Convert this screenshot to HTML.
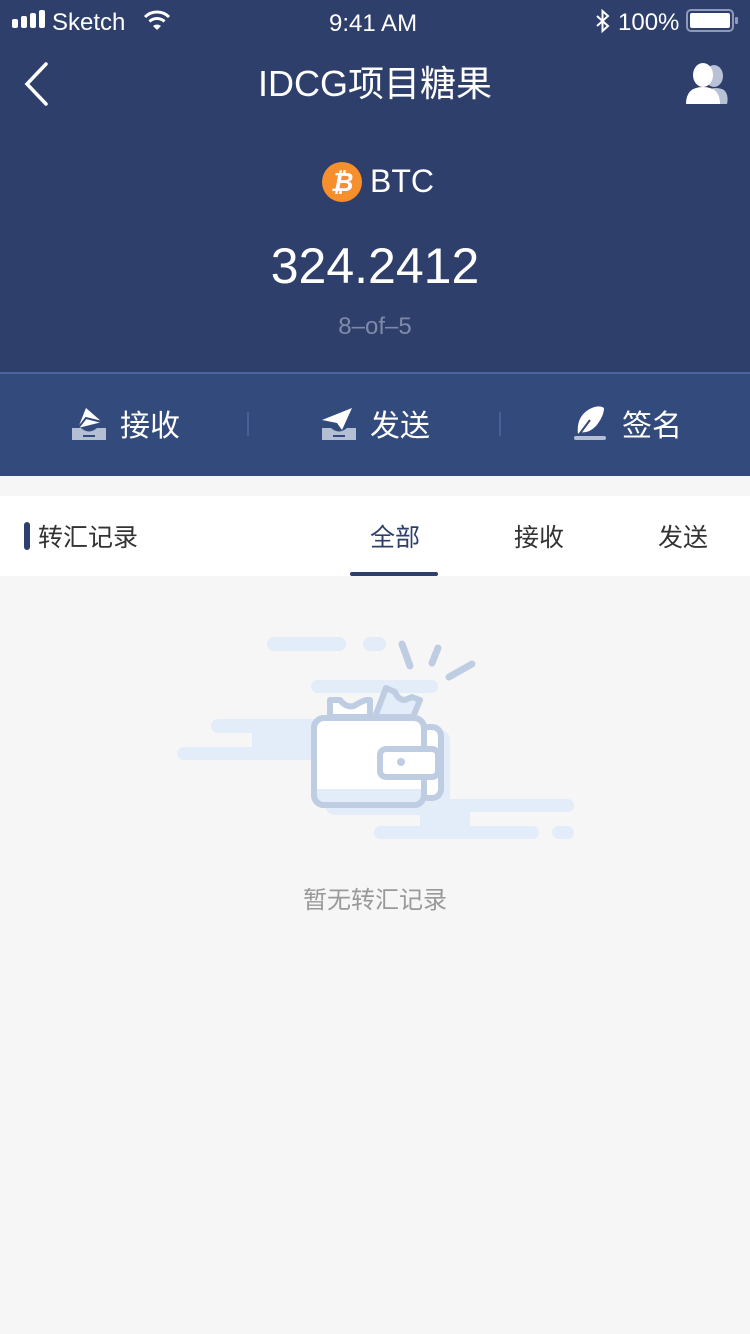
<!DOCTYPE html>
<html><head><meta charset="utf-8"><style>
*{margin:0;padding:0;box-sizing:border-box}
body{width:750px;height:1334px;background:#f6f6f6;font-family:"Liberation Sans","Noto Sans CJK SC",sans-serif;position:relative;overflow:hidden}
.abs{position:absolute}
.hdr{left:0;top:0;width:750px;height:372px;background:#2f3f6b}
.bar{left:0;top:372px;width:750px;height:104px;background:#334a7c;border-top:2px solid #4a64a0}
.w{color:#fff}
</style></head><body>
<div class="abs hdr"></div>
<div class="abs bar"></div>
<!-- status bar -->
<svg class="abs" style="left:12px;top:10px" width="36" height="20"><rect x="0" y="9" width="6" height="9" rx="2" fill="#fff"/><rect x="9" y="6" width="6" height="12" rx="2" fill="#fff"/><rect x="18" y="3" width="6" height="15" rx="2" fill="#fff"/><rect x="27" y="0" width="6" height="18" rx="2" fill="#fff"/></svg>
<div class="abs w" style="left:52px;top:9px;font-size:24px">Sketch</div>
<svg class="abs" style="left:143px;top:9px" width="28" height="22" viewBox="0 0 28 22"><path d="M2 8 A17 17 0 0 1 26 8" stroke="#fff" stroke-width="3" fill="none"/><path d="M6.5 12.5 A11 11 0 0 1 21.5 12.5" stroke="#fff" stroke-width="3" fill="none"/><path d="M10 17 L14 21 L18 17 A6 6 0 0 0 10 17Z" fill="#fff"/></svg>
<div class="abs w" style="left:329px;top:10px;font-size:24px">9:41 AM</div>
<svg class="abs" style="left:595px;top:9px" width="16" height="24"><path d="M2 7 L13 17 L7.5 22 V2 L13 7 L2 17" stroke="#fff" stroke-width="2" fill="none"/></svg>
<div class="abs w" style="left:618px;top:9px;font-size:24px">100%</div>
<svg class="abs" style="left:686px;top:9px" width="54" height="24"><rect x="1" y="1" width="46" height="21" rx="4" fill="none" stroke="#8f9ab8" stroke-width="2"/><rect x="4" y="4" width="40" height="15" rx="2" fill="#fff"/><rect x="49" y="8" width="3" height="7" rx="1" fill="#8f9ab8"/></svg>
<!-- nav -->
<svg class="abs" style="left:22px;top:62px" width="28" height="44"><path d="M24 2 L5 22 L24 42" stroke="#fff" stroke-width="3.5" fill="none" stroke-linecap="round"/></svg>
<div class="abs w" style="left:0;width:750px;text-align:center;top:55px;font-size:36px">IDCG项目糖果</div>
<svg class="abs" style="left:684px;top:62px" width="46" height="44"><ellipse cx="30" cy="14" rx="9" ry="11" fill="#b9c1d6"/><path d="M24 42 V28 Q32 24 40 28 Q45 33 43 42Z" fill="#b9c1d6"/><ellipse cx="19" cy="13" rx="10" ry="12" fill="#fff"/><path d="M2 42 Q2 25 19 25 Q36 25 36 42Z" fill="#fff"/></svg>
<!-- BTC -->
<svg class="abs" style="left:322px;top:162px" width="40" height="40"><circle cx="20" cy="20" r="20" fill="#f7902c"/><text x="20" y="29" text-anchor="middle" font-family="Liberation Sans" font-weight="bold" font-style="italic" font-size="26" fill="#fff">₿</text></svg>
<div class="abs w" style="left:370px;top:163px;font-size:32px">BTC</div>
<div class="abs w" style="left:0;width:750px;text-align:center;top:237px;font-size:50px">324.2412</div>
<div class="abs" style="left:0;width:750px;text-align:center;top:313px;font-size:24px;color:#7f8aa8">8–of–5</div>
<!-- action bar -->
<svg class="abs" style="left:72px;top:408px" width="34" height="34"><path d="M6 20 L14 0 L30 14 Z" fill="#fff"/><path d="M6 20 L14 10 L30 14" stroke="#334a7c" stroke-width="2" fill="none"/><path d="M0 20 H9 Q17 27 25 20 H34 V32 H0Z" fill="#b5bfd4"/><rect x="11" y="27" width="12" height="2" fill="#334a7c"/></svg>
<div class="abs w" style="left:120px;top:401px;font-size:30px">接收</div>
<div class="abs" style="left:247px;top:412px;width:2px;height:24px;background:#47609a"></div>
<svg class="abs" style="left:322px;top:408px" width="34" height="34"><path d="M0 12 L30 0 L20 22 L15 15 Z" fill="#fff"/><path d="M0 20 H9 Q17 27 25 20 H34 V32 H0Z" fill="#b5bfd4"/><rect x="11" y="27" width="12" height="2" fill="#334a7c"/></svg>
<div class="abs w" style="left:370px;top:401px;font-size:30px">发送</div>
<div class="abs" style="left:499px;top:412px;width:2px;height:24px;background:#47609a"></div>
<svg class="abs" style="left:574px;top:406px" width="34" height="34"><path d="M4 28 Q2 12 14 4 Q24 -2 30 2 Q30 10 22 20 Q14 28 6 26 Z" fill="#fff"/><path d="M4 30 L16 14" stroke="#334a7c" stroke-width="2"/><rect x="0" y="30" width="32" height="4" rx="2" fill="#b5bfd4"/></svg>
<div class="abs w" style="left:622px;top:401px;font-size:30px">签名</div>
<!-- tabs -->
<div class="abs" style="left:0;top:496px;width:750px;height:80px;background:#fff"></div>
<div class="abs" style="left:24px;top:522px;width:6px;height:28px;border-radius:3px;background:#2f3f6b"></div>
<div class="abs" style="left:38px;top:518px;font-size:25px;color:#333">转汇记录</div>
<div class="abs" style="left:370px;top:518px;font-size:25px;color:#2f3f6b">全部</div>
<div class="abs" style="left:514px;top:518px;font-size:25px;color:#333">接收</div>
<div class="abs" style="left:658px;top:518px;font-size:25px;color:#333">发送</div>
<div class="abs" style="left:350px;top:572px;width:88px;height:4px;border-radius:2px;background:#2f3f6b"></div>
<!-- illustration -->
<svg class="abs" style="left:0;top:0" width="750" height="900">
<g fill="#e3ecf9">
<rect x="267" y="637" width="79" height="14" rx="7"/><rect x="363" y="637" width="23" height="14" rx="7"/>
<rect x="311" y="680" width="127" height="13" rx="6.5"/>
<rect x="211" y="719" width="120" height="14" rx="7"/><rect x="252" y="730" width="80" height="20" />
<rect x="177" y="747" width="150" height="13" rx="6.5"/>
<rect x="420" y="799" width="154" height="13" rx="6.5"/><rect x="420" y="805" width="50" height="25"/>
<rect x="374" y="826" width="165" height="13" rx="6.5"/><rect x="552" y="826" width="22" height="13" rx="6.5"/>
<rect x="325" y="730" width="125" height="85" rx="10"/>
</g>
<g stroke="#bfcde3" stroke-width="7" stroke-linecap="round" fill="none">
<line x1="402" y1="644" x2="410" y2="666"/><line x1="438" y1="648" x2="432" y2="663"/><line x1="449" y1="677" x2="472" y2="664"/>
</g>
<g stroke="#bfcde3" stroke-width="6" stroke-linejoin="round">
<path d="M330 717 V700 H340 Q346 708 354 706 Q360 702 366 700 H370 V717Z" fill="#fff"/>
<path d="M375 717 L386 688 L395 692 Q398 700 405 700 L412 697 L420 700 L413 717Z" fill="#e3ecf9"/>
<rect x="420" y="727" width="21" height="71" rx="9" fill="#fff"/>
<rect x="314" y="718" width="110" height="87" rx="10" fill="#fff"/>
</g>
<rect x="317" y="789" width="104" height="13" fill="#e3ecf9"/>
<rect x="314" y="718" width="110" height="87" rx="10" fill="none" stroke="#bfcde3" stroke-width="6"/>
<rect x="380" y="749" width="58" height="28" rx="6" fill="#fff" stroke="#bfcde3" stroke-width="6"/>
<circle cx="401" cy="762" r="4" fill="#bfcde3"/>
</svg>
<div class="abs" style="left:0;width:750px;text-align:center;top:880px;font-size:24px;color:#999">暂无转汇记录</div>
</body></html>
